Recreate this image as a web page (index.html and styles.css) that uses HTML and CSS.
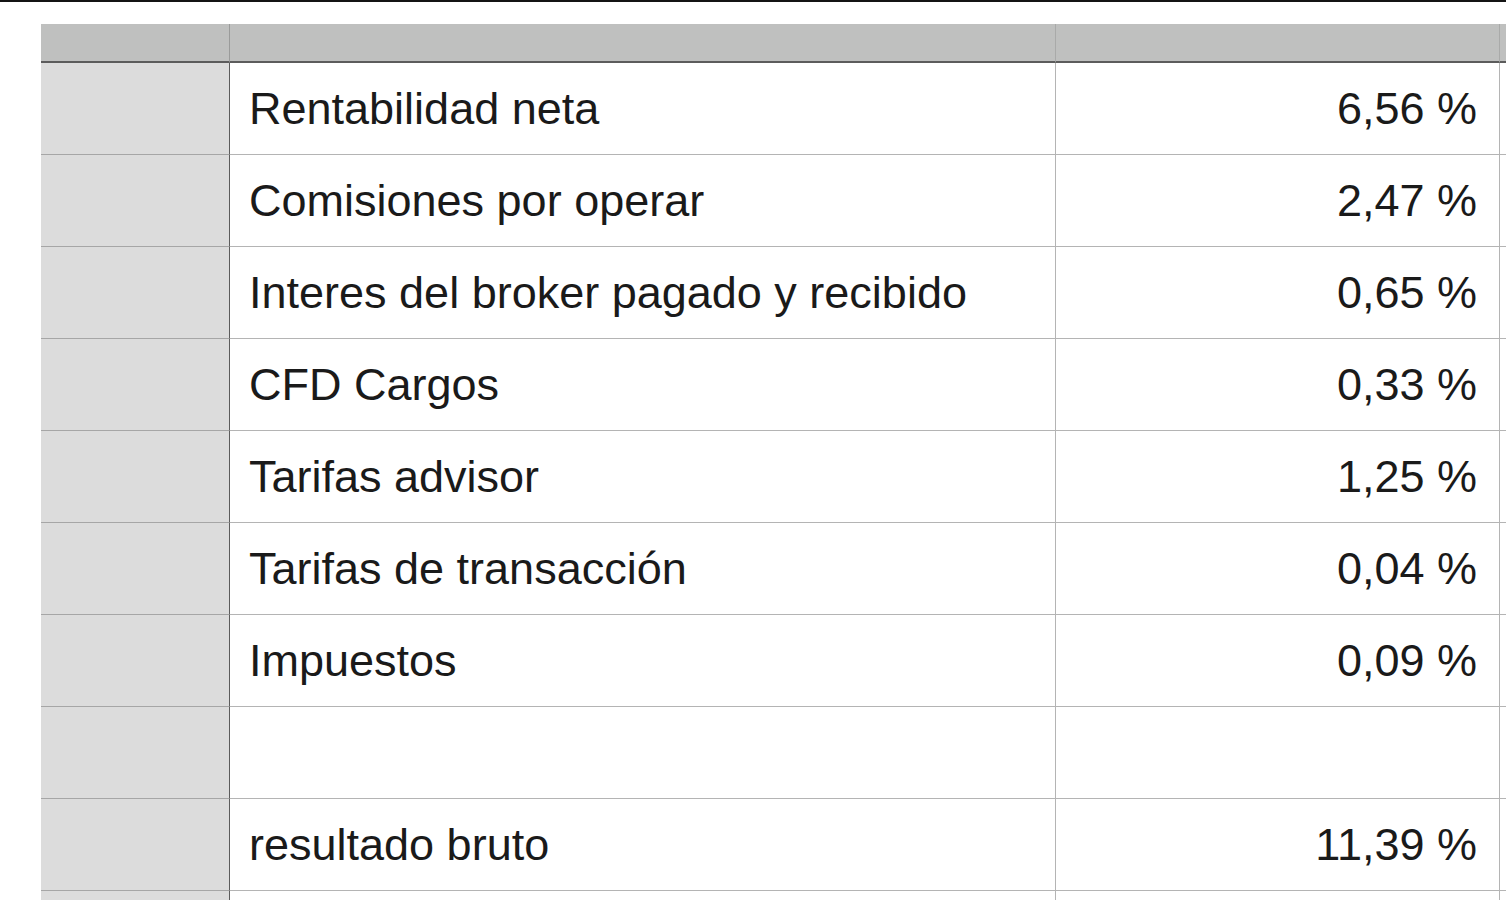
FILE: index.html
```html
<!DOCTYPE html>
<html lang="es">
<head>
<meta charset="utf-8">
<title>Tabla</title>
<link rel="stylesheet" href="styles.css">
</head>
<body>
<div class="page">
  <div class="sheet">
    <div class="hdr c1"></div><div class="hdr c2"></div><div class="hdr c3"></div><div class="hdr c4"></div>

    <div class="cell c1"></div><div class="cell c2">Rentabilidad neta</div><div class="cell c3">6,56 %</div><div class="cell c4"></div>
    <div class="cell c1"></div><div class="cell c2">Comisiones por operar</div><div class="cell c3">2,47 %</div><div class="cell c4"></div>
    <div class="cell c1"></div><div class="cell c2">Interes del broker pagado y recibido</div><div class="cell c3">0,65 %</div><div class="cell c4"></div>
    <div class="cell c1"></div><div class="cell c2">CFD Cargos</div><div class="cell c3">0,33 %</div><div class="cell c4"></div>
    <div class="cell c1"></div><div class="cell c2">Tarifas advisor</div><div class="cell c3">1,25 %</div><div class="cell c4"></div>
    <div class="cell c1"></div><div class="cell c2">Tarifas de transacción</div><div class="cell c3">0,04 %</div><div class="cell c4"></div>
    <div class="cell c1"></div><div class="cell c2">Impuestos</div><div class="cell c3">0,09 %</div><div class="cell c4"></div>
    <div class="cell c1"></div><div class="cell c2"></div><div class="cell c3"></div><div class="cell c4"></div>
    <div class="cell c1"></div><div class="cell c2">resultado bruto</div><div class="cell c3">11,39 %</div><div class="cell c4"></div>
    <div class="cell c1"></div><div class="cell c2"></div><div class="cell c3"></div><div class="cell c4"></div>
  </div>
</div>
</body>
</html>
```
FILE: styles.css
```css
html, body {
  margin: 0;
  padding: 0;
  background: #ffffff;
  overflow: hidden;
}

.page {
  width: 1506px;
  height: 900px;
  overflow: hidden;
  border-top: 2px solid #141414;
  box-sizing: border-box;
  padding: 22px 0 0 41px;
  font-family: "Liberation Sans", Arial, Helvetica, sans-serif;
}

.sheet {
  display: grid;
  grid-template-columns: 189px 826px 444px 60px;
  grid-auto-rows: 92px;
  grid-template-rows: 39px;
  width: 1519px;
}

.hdr {
  background: #bfc0bf;
  border-bottom: 2px solid #5c5c5c;
  border-right: 1px solid #a9aaa9;
}

.hdr.c1 {
  border-right: 1px solid #9a9b9a;
}

.cell {
  border-bottom: 1px solid #b4b4b4;
  border-right: 1px solid #b4b4b4;
  display: flex;
  align-items: center;
  font-size: 45px;
  color: #1a1a1a;
  white-space: nowrap;
}

.cell.c1 {
  background: #dcdcdc;
  border-right: 1px solid #5c5c5c;
  border-bottom-color: #a6a6a6;
}

.cell.c2 {
  padding-left: 19px;
}

.cell.c3 {
  justify-content: flex-end;
  padding-right: 22px;
}
```
